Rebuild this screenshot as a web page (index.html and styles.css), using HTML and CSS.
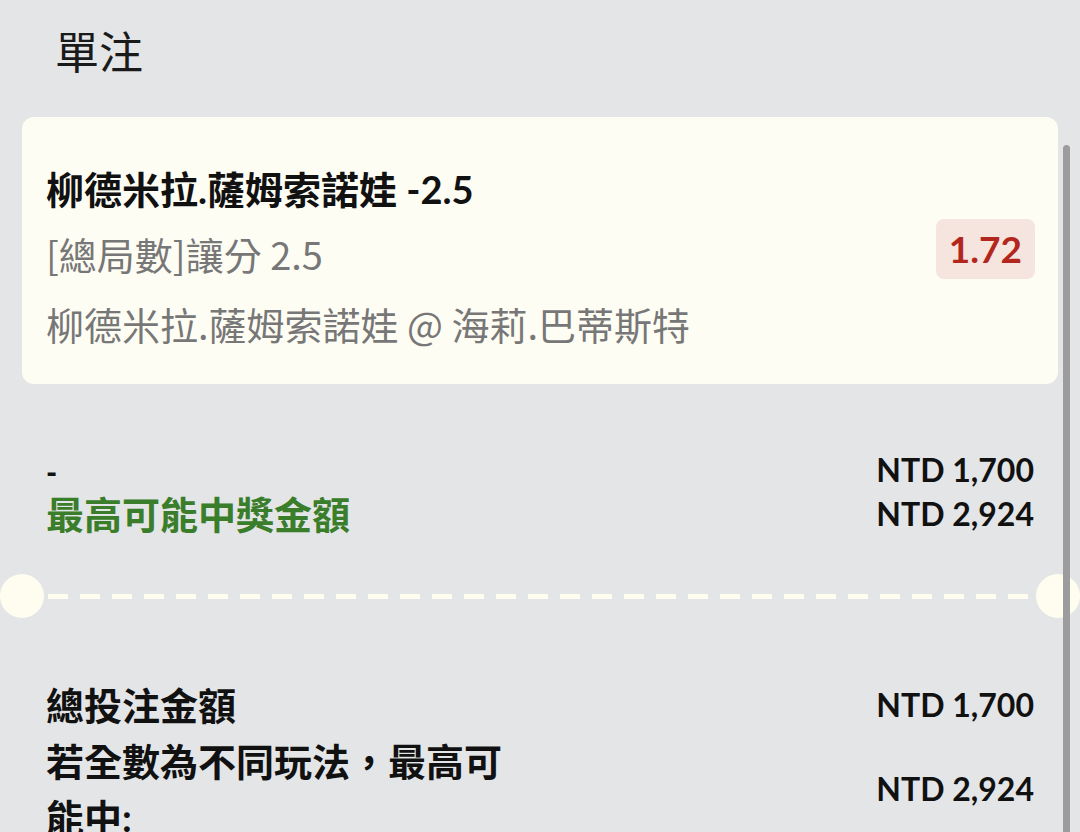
FILE: index.html
```html
<!DOCTYPE html>
<html>

<head>
    <title>單注</title>
    <link rel="stylesheet" href="styles.css">
</head>

<body>
    <div class="page">
        <h1 class="title">單注</h1>

        <div class="bet-card">
            <div class="bet-info">
                <div class="bet-name">柳德米拉.薩姆索諾娃 -2.5</div>
                <div class="bet-market">[總局數]讓分 2.5</div>
                <div class="bet-match">柳德米拉.薩姆索諾娃 @ 海莉.巴蒂斯特</div>
            </div>
            <div class="odds">1.72</div>
        </div>

        <div class="summary">
            <div class="summary-left">
                <div class="dash-label">-</div>
                <div class="win-label">最高可能中獎金額</div>
            </div>
            <div class="amounts">
                <div>NTD 1,700</div>
                <div>NTD 2,924</div>
            </div>
        </div>

        <div class="divider">
            <span class="notch"></span>
            <span class="dashes"></span>
            <span class="notch"></span>
        </div>

        <div class="totals">
            <div class="total-row">
                <div class="total-label">總投注金額</div>
                <div class="total-value">NTD 1,700</div>
            </div>
            <div class="total-row">
                <div class="total-label wrap">若全數為不同玩法，最高可能中:</div>
                <div class="total-value">NTD 2,924</div>
            </div>
        </div>
    </div>

    <div class="scrollbar"></div>
</body>

</html>
```

FILE: styles.css
```css
body {
    font-family: Lato, "Noto Sans CJK TC", sans-serif;
    margin: 0;
    padding: 0;
    background-color: #e4e5e7;
    color: #111;
    overflow: hidden;
}

.page {
    padding: 0 22px;
}

.title {
    margin: 0;
    padding: 22px 0 0 33px;
    height: 117px;
    box-sizing: border-box;
    font-size: 44px;
    font-weight: normal;
    font-family: "Noto Sans CJK TC", sans-serif;
    line-height: 56px;
    color: #1a1a1a;
}

.bet-card {
    display: flex;
    align-items: center;
    background-color: #fefdf4;
    border-radius: 12px;
    padding: 24px 23px 24px 24px;
    height: 267px;
    box-sizing: border-box;
    width: 1036px;
}

.bet-info {
    flex: 1;
    align-self: flex-start;
    padding-top: 24px;
}

.bet-name {
    font-size: 38px;
    font-weight: bold;
    line-height: 48px;
    color: #111;
    margin-bottom: 17px;
}

.bet-market,
.bet-match {
    font-family: "Noto Sans CJK TC", sans-serif;
    font-size: 38px;
    line-height: 48px;
    color: #777;
}

.bet-market {
    margin-bottom: 22px;
}

.odds {
    background-color: #f6e5de;
    color: #b3261e;
    font-weight: bold;
    font-size: 37px;
    border-radius: 8px;
    padding: 6px 13px;
    line-height: 48px;
    margin-top: -4px;
}

.summary {
    display: flex;
    justify-content: space-between;
    padding: 66px 24px 0 24px;
    width: 1036px;
    box-sizing: border-box;
}

.dash-label {
    font-size: 30px;
    font-weight: 900;
    line-height: 36px;
    margin-top: 4px;
}

.win-label {
    font-size: 38px;
    font-weight: bold;
    color: #3a7d2a;
    line-height: 48px;
}

.amounts {
    text-align: right;
    font-size: 32px;
    font-weight: bold;
    line-height: 44px;
    margin-top: -2px;
}

.divider {
    display: flex;
    align-items: center;
    margin: 36px 0 0 -22px;
    width: 1080px;
}

.notch {
    width: 44px;
    height: 44px;
    border-radius: 50%;
    background-color: #fefdf0;
    flex: none;
}

.dashes {
    flex: 1;
    height: 5px;
    margin: 0 4px;
    background-image: linear-gradient(to right, #fefdf0 20px, transparent 20px);
    background-size: 32px 5px;
    background-repeat: repeat-x;
}

.totals {
    padding: 59px 24px 0 24px;
    width: 1036px;
    box-sizing: border-box;
}

.total-row {
    display: flex;
    justify-content: space-between;
    align-items: center;
    font-weight: bold;
}

.total-label {
    font-size: 38px;
    line-height: 56px;
}

.total-label.wrap {
    width: 470px;
}

.total-value {
    font-size: 32px;
    line-height: 44px;
}

.scrollbar {
    position: absolute;
    top: 145px;
    left: 1063px;
    width: 7px;
    height: 700px;
    border-radius: 4px;
    background-color: #9c9c9e;
}
```
